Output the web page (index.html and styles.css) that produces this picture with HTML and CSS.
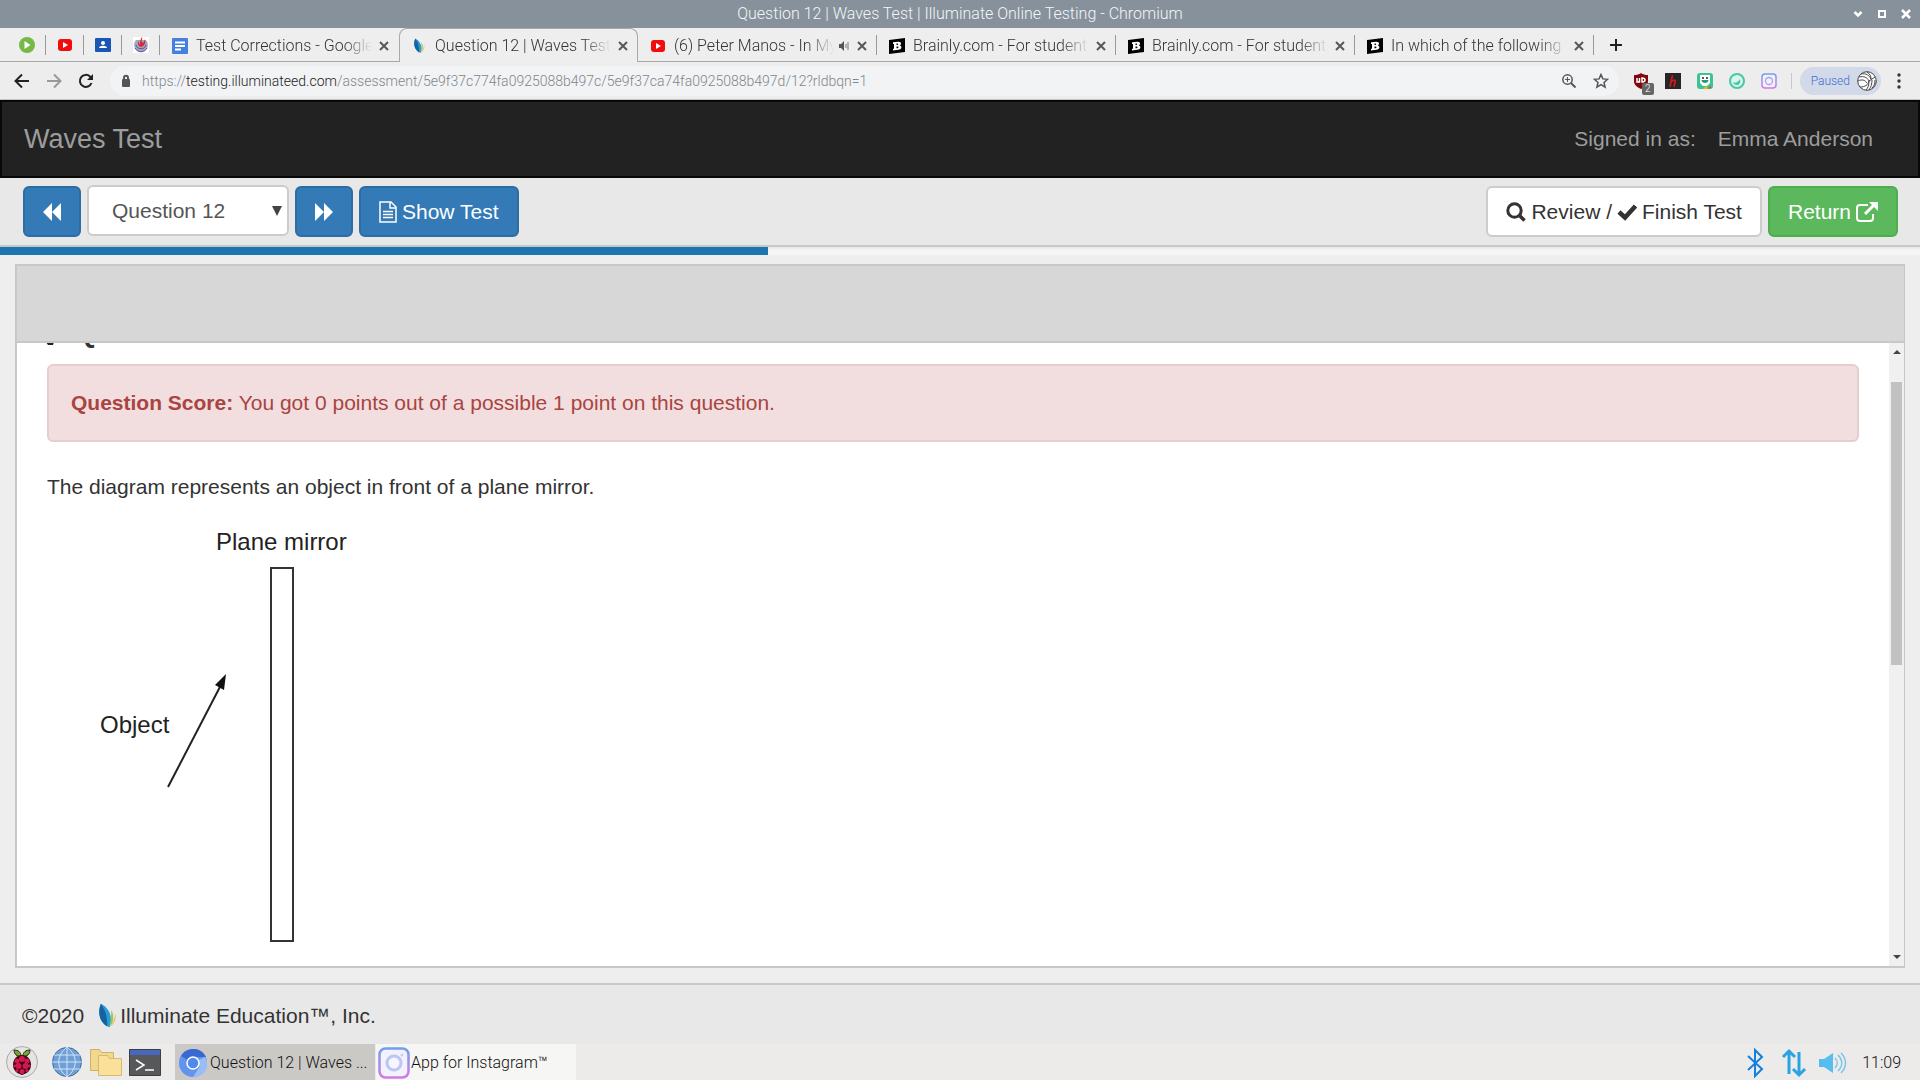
FILE: index.html
```html
<!DOCTYPE html>
<html lang="en">
<head>
<meta charset="utf-8">
<title>Question 12 | Waves Test | Illuminate Online Testing</title>
<link rel="stylesheet" href="styles.css">
</head>
<body>
<svg class="defs" width="0" height="0" aria-hidden="true">
  <defs>
    <linearGradient id="insta" x1="0" y1="0" x2="0" y2="1"><stop offset="0" stop-color="#6fa0ea"/><stop offset="1" stop-color="#d07be6"/></linearGradient>
    <symbol id="close" viewBox="0 0 16 16"><path d="M4 4l8 8M12 4l-8 8" stroke="#55585c" stroke-width="2"/></symbol>
    <symbol id="youtube" viewBox="0 0 16 16"><rect x="1" y="2" width="14" height="12" rx="3" fill="#f20d0d"/><path d="M6 5l5 3-5 3z" fill="#fff"/></symbol>
    <symbol id="brainly" viewBox="0 0 16 16"><path d="M0 2l16-2v14L0 16z" fill="#000"/><path d="M4 4.300l5-.6c2-.2 3 .6 3 1.800 0 1-.6 1.600-1.200 1.900 1 .2 1.600.8 1.600 1.900 0 1.500-1.200 2.300-3 2.500L4 12.400v-1.600l1-.1V5.900l-1 .1zM7.500 5.600v1.500h.8c1.200-.1 1.200-1.600 0-1.500zm0 3v1.700h1c1.300-.1 1.300-1.800 0-1.700z" fill="#fff"/></symbol>
    <symbol id="leaf" viewBox="0 0 22 30"><path d="M4 1c10 5 14 16 10 27C4 25-1 13 4 1z" fill="#2a9bd6"/><path d="M4 1c-4 10-2 20 7 26C12 18 9 8 4 1z" fill="#14639f"/><path d="M16 8c3 5 3 14-1 19 0-6 1-13 1-19z" fill="#8fcb5b"/><path d="M21 12c1 7-2 13-6 15 3-5 5-10 6-15z" fill="#f3c25b"/></symbol>
  </defs>
</svg>

<header class="titlebar">
  <span class="window-title">Question 12 | Waves Test | Illuminate Online Testing - Chromium</span>
  <div class="window-buttons">
    <button aria-label="Minimize"><svg width="12" height="12" viewBox="0 0 12 12"><path d="M2.500 4L6 7.500 9.500 4" fill="none" stroke="#fff" stroke-width="2.500"/></svg></button>
    <button aria-label="Maximize"><svg width="12" height="12" viewBox="0 0 12 12"><path d="M3 3h6v6H3z" fill="none" stroke="#fff" stroke-width="2"/></svg></button>
    <button aria-label="Close window"><svg width="12" height="12" viewBox="0 0 12 12"><path d="M2 2l8 8M10 2l-8 8" stroke="#fff" stroke-width="2.500"/></svg></button>
  </div>
</header>

<nav class="tabs" aria-label="Tabs">
  <div class="pinned"><svg width="16" height="16" viewBox="0 0 16 16"><circle cx="8" cy="8" r="8" fill="#76b947"/><path d="M5.500 4l6 4-6 4z" fill="#fff"/></svg></div>
  <div class="pinned"><svg width="16" height="16"><use href="#youtube"/></svg></div>
  <div class="pinned"><svg width="16" height="16" viewBox="0 0 16 16"><rect y="1" width="16" height="14" rx="1" fill="#1b56b5"/><circle cx="8" cy="6" r="2" fill="#fff"/><path d="M4 11c0-3 8-3 8 0z" fill="#fff"/></svg></div>
  <div class="pinned"><svg width="16" height="16" viewBox="0 0 16 16"><rect width="16" height="16" fill="#fff"/><path d="M3 3C-1 8 2 15 8 15s9-7 5-12" fill="#a3a4c6"/><path d="M3 8c1 5 9 5 10 0M2 11c3 5 9 5 12 0" fill="none" stroke="#55558a"/><path d="M9 0c1 3-1 3 0 5s3-1 2-3c3 4 0 7-3 8C5 9 4 6 6 4c0 2 0 3 1 3 0-2 0-4 2-7z" fill="#d92a2f"/></svg></div>
  <div class="tab"><svg width="16" height="16" viewBox="0 0 16 16"><rect width="16" height="16" rx="1" fill="#4480e0"/><path d="M3 4.500h10M3 8h10M3 11.500h6" stroke="#fff" stroke-width="2"/></svg><a href="#docs">Test Corrections - Google</a><button aria-label="Close tab"><svg width="16" height="16"><use href="#close"/></svg></button></div>
  <div class="tab active"><svg width="16" height="16"><use href="#leaf"/></svg><a href="#question">Question 12 | Waves Test</a><button aria-label="Close tab"><svg width="16" height="16"><use href="#close"/></svg></button></div>
  <div class="tab"><svg width="16" height="16"><use href="#youtube"/></svg><a href="#video">(6) Peter Manos - In My</a><svg width="12" height="12" viewBox="0 0 12 12"><path d="M1 4h2l3-3v10L3 8H1z" fill="#555"/><path d="M8 4v4M10 2v8" stroke="#777"/></svg><button aria-label="Close tab"><svg width="16" height="16"><use href="#close"/></svg></button></div>
  <div class="tab"><svg width="16" height="16"><use href="#brainly"/></svg><a href="#brainly1">Brainly.com - For student</a><button aria-label="Close tab"><svg width="16" height="16"><use href="#close"/></svg></button></div>
  <div class="tab"><svg width="16" height="16"><use href="#brainly"/></svg><a href="#brainly2">Brainly.com - For student</a><button aria-label="Close tab"><svg width="16" height="16"><use href="#close"/></svg></button></div>
  <div class="tab"><svg width="16" height="16"><use href="#brainly"/></svg><a href="#brainly3">In which of the following</a><button aria-label="Close tab"><svg width="16" height="16"><use href="#close"/></svg></button></div>
  <button class="new-tab" aria-label="New tab"><svg width="14" height="14" viewBox="0 0 14 14"><path d="M7 1v12M1 7h12" stroke="#222" stroke-width="2"/></svg></button>
</nav>

<div class="browser-bar">
  <button class="tool" aria-label="Back"><svg width="16" height="16" viewBox="0 0 16 16"><path d="M15 8H2M8 1.500L1.500 8 8 14.500" fill="none" stroke="#222" stroke-width="2"/></svg></button>
  <button class="tool" aria-label="Forward"><svg width="16" height="16" viewBox="0 0 16 16"><path d="M1 8h13M8 1.500L14.500 8 8 14.500" fill="none" stroke="#999" stroke-width="2"/></svg></button>
  <button class="tool" aria-label="Reload"><svg width="16" height="16" viewBox="0 0 16 16"><path d="M13.500 10A6 6 0 1 1 12 3.500L13 5" fill="none" stroke="#222" stroke-width="2"/><path d="M15 1v6H9z" fill="#222"/></svg></button>
  <div class="address">
    <svg width="12" height="14" viewBox="0 0 12 14"><rect x="2" y="5" width="8" height="8" rx="1" fill="#555"/><path d="M4 6V4c0-3 4-3 4 0v2" fill="none" stroke="#555" stroke-width="2"/></svg>
    <a class="url" href="#url">https://<b>testing.illuminateed.com</b>/assessment/5e9f37c774fa0925088b497c/5e9f37ca74fa0925088b497d/12?rldbqn=1</a>
    <button class="tool" aria-label="Zoom"><svg width="16" height="16" viewBox="0 0 16 16"><circle cx="6.500" cy="6.500" r="4.700" fill="none" stroke="#555" stroke-width="1.500"/><path d="M10 10l4.500 4.500" stroke="#555" stroke-width="2"/><path d="M4 6.500h5M6.500 4v5" stroke="#555"/></svg></button>
    <button class="tool" aria-label="Bookmark"><svg width="16" height="16" viewBox="0 0 16 16"><path d="M8 1.500l1.900 4.400 4.700.4-3.600 3.100 1.100 4.700L8 11.600l-4.100 2.500L5 9.400 1.400 6.300l4.700-.4z" fill="none" stroke="#555" stroke-width="1.500"/></svg></button>
  </div>
  <div class="extensions">
    <button class="tool badge-host" aria-label="Blocker"><svg width="16" height="16" viewBox="0 0 16 16"><path d="M1 2c3 0 5-.5 7-2 2 1.500 4 2 7 2v6c0 4-3 6-7 8-4-2-7-4-7-8z" fill="#80070b"/><path d="M4 5v4h2.500V5M9 5v4c4 0 4-4 0-4z" fill="none" stroke="#fff" stroke-width="1.500"/></svg><span class="badge">2</span></button>
    <button class="tool" aria-label="Honey"><svg width="16" height="16" viewBox="0 0 16 16"><rect width="16" height="16" fill="#262626"/><path d="M7.500 2L5 14M6 9c2-2 5-3 4 0l-1 5" fill="none" stroke="#c8191d" stroke-width="1.800"/></svg></button>
    <button class="tool" aria-label="Bitmoji"><svg width="16" height="16" viewBox="0 0 16 16"><rect width="16" height="16" rx="3" fill="#3bc392"/><path d="M3 2h10v8l-3 3H6l-3-3z" fill="#fff"/><circle cx="6" cy="5" r="1" fill="#222"/><circle cx="10" cy="5" r="1" fill="#222"/><path d="M4.500 7h7c0 4-7 4-7 0z" fill="#279b72"/><path d="M6 16l3-3 3 3z" fill="#f7b512"/><path d="M10 16l4-3v2z" fill="#e23c2d"/></svg></button>
    <button class="tool" aria-label="Screencastify"><svg width="16" height="16" viewBox="0 0 16 16"><circle cx="8" cy="8" r="7" fill="#dcf5ec" stroke="#46c9a4" stroke-width="2"/><path d="M4 9c2 2 5 0 7-3 1 4-1 6-3 6S4 11 4 9z" fill="#46c9a4"/></svg></button>
    <button class="tool" aria-label="App for Instagram"><svg width="16" height="16" viewBox="0 0 16 16"><rect x="1" y="1" width="14" height="14" rx="3" fill="#f5effc" stroke="url(#insta)" stroke-width="1.500"/><circle cx="8" cy="8" r="3.500" fill="none" stroke="#a5a4e9" stroke-width="1.300"/></svg></button>
  </div>
  <button class="profile"><span>Paused</span><svg width="20" height="20" viewBox="0 0 20 20"><circle cx="10" cy="10" r="9.300" fill="#fff" stroke="#444"/><path d="M2 6c5-1 8 0 10 4M4 3c5-1 8 1 10 5M12 10c-1 4-4 6-9 6M12 10l6-4M12 10c0 4-1 7-3 9M14 8c0-3-1-5-4-7M15 9c0 4-1 7-3 10M1 10c4-2 7-1 9 2M18 9c0 4-1 6-3 8" fill="none" stroke="#444"/></svg></button>
  <button class="tool menu" aria-label="Menu"><svg width="4" height="16" viewBox="0 0 4 16"><g fill="#333"><circle cx="2" cy="2" r="1.700"/><circle cx="2" cy="8" r="1.700"/><circle cx="2" cy="14" r="1.700"/></g></svg></button>
</div>

<header class="navbar">
  <a class="brand" href="#home">Waves Test</a>
  <div class="signed-in"><span>Signed in as:</span><a href="#account">Emma Anderson</a></div>
</header>

<div class="test-bar">
  <button class="btn primary square" aria-label="Previous question"><svg width="20" height="20" viewBox="0 0 20 20"><path d="M10 1v18L1 10zM19 1v18l-9-9z" fill="#fff"/></svg></button>
  <div class="select-box">
    <select aria-label="Question"><option>Question 12</option></select>
    <svg class="caret" width="10" height="10" viewBox="0 0 10 10"><path d="M0 0h10L5 10z" fill="#444"/></svg>
  </div>
  <button class="btn primary square" aria-label="Next question"><svg width="20" height="20" viewBox="0 0 20 20"><path d="M1 1v18l9-9zM10 1v18l9-9z" fill="#fff"/></svg></button>
  <button class="btn primary"><svg width="18" height="22" viewBox="0 0 18 22"><path d="M1 1h11l5 5v15H1zM11 1v6h6M4 10.500h10M4 13.500h10M4 16.500h10" fill="none" stroke="#fff" stroke-width="1.500"/></svg><span>Show Test</span></button>
  <button class="btn plain finish"><svg width="20" height="20" viewBox="0 0 20 20"><circle cx="8.500" cy="8.500" r="6.700" fill="none" stroke="#333" stroke-width="3"/><path d="M13 13l5.500 5.500" stroke="#333" stroke-width="3.500"/></svg><span>Review /</span><svg width="20" height="20" viewBox="0 0 20 20"><path d="M2 10l6 5.500L18.500 4" fill="none" stroke="#333" stroke-width="4.500"/></svg><span>Finish Test</span></button>
  <button class="btn success"><span>Return</span><svg width="22" height="20" viewBox="0 0 22 20"><path d="M12 3H4a3 3 0 0 0-3 3v10a3 3 0 0 0 3 3h10a3 3 0 0 0 3-3v-4" fill="none" stroke="#fff" stroke-width="2"/><path d="M9 12l9-9" stroke="#fff" stroke-width="3"/><path d="M13 0h9v9z" fill="#fff"/></svg></button>
</div>
<div class="progress"><div class="progress-value" style="width:40%"></div></div>

<main class="stage">
  <section class="panel">
    <div class="panel-head"></div>
    <div class="panel-body">
      <article class="question">
        <h2><svg width="22" height="24" viewBox="0 0 22 24"><path d="M7 1v18M7 2h14l-4 5 4 5H7" fill="none" stroke="#222" stroke-width="2"/><path d="M-1 21h8l-1 3H1z" fill="#222"/></svg>Question</h2>
        <div class="alert"><strong>Question Score:</strong> You got 0 points out of a possible 1 point on this question.</div>
        <p>The diagram represents an object in front of a plane mirror.</p>
        <svg class="diagram" width="320" height="440" viewBox="0 0 320 440" role="img" aria-label="An object in front of a plane mirror">
          <text x="169" y="36">Plane mirror</text>
          <rect x="224" y="54" width="22" height="373" fill="none" stroke="#333" stroke-width="2"/>
          <text x="53" y="219">Object</text>
          <path d="M121 273L175 169" stroke="#222" stroke-width="2"/>
          <path d="M179 160l-2 16-9-5z" fill="#111"/>
        </svg>
      </article>
      <div class="scrollbar">
        <svg width="8" height="4" viewBox="0 0 8 4"><path d="M4 0l4 4H0z" fill="#444"/></svg>
        <div class="track"><div class="thumb"></div></div>
        <svg width="8" height="4" viewBox="0 0 8 4"><path d="M0 0h8L4 4z" fill="#444"/></svg>
      </div>
    </div>
  </section>
</main>

<footer class="site-footer"><span>©2020</span><svg width="22" height="26"><use href="#leaf"/></svg><span>Illuminate Education™, Inc.</span></footer>

<div class="taskbar">
  <div class="launchers">
    <button class="tool" aria-label="Menu"><svg width="32" height="32" viewBox="0 0 32 32"><circle cx="16" cy="16" r="15.500" fill="#e4e4e4" stroke="#aaa"/><path d="M15 10C11 11 8 8 8 4c4 0 7 2 7 6zm2 0c4 1 7-2 7-6-4 0-7 2-7 6z" fill="#75a928" stroke="#222"/><path d="M16 9c5 0 9 4 9 10s-5 9-9 10c-4-1-9-4-9-10S11 9 16 9z" fill="#3b0715"/><g fill="#d51750"><circle cx="16" cy="13" r="3"/><circle cx="11" cy="15" r="2.500"/><circle cx="21" cy="15" r="2.500"/><circle cx="12.500" cy="20" r="3"/><circle cx="19.500" cy="20" r="3"/><circle cx="16" cy="25.500" r="2.500"/><circle cx="8.800" cy="20" r="1.400"/><circle cx="23.200" cy="20" r="1.400"/><circle cx="11" cy="24.500" r="1.500"/><circle cx="21" cy="24.500" r="1.500"/></g></svg></button>
    <button class="tool" aria-label="Web browser"><svg width="32" height="32" viewBox="0 0 32 32"><circle cx="16" cy="16" r="14.500" fill="#6f9fd6" stroke="#3f6d9e"/><path d="M16 1v30M1 16h30M3 9h26M3 23h26M16 1C5 10 5 22 16 31M16 1c11 9 11 21 0 30" fill="none" stroke="#d2e5f8"/></svg></button>
    <button class="tool" aria-label="File manager"><svg width="32" height="32" viewBox="0 0 32 32"><path d="M.5 3.500h9l2 3h12v18H.5z" fill="#f2d88c" stroke="#ceb36c"/><path d="M8.500 9.500h9l2 3h12v17h-23z" fill="#fbe09a" stroke="#d4b973"/></svg></button>
    <button class="tool" aria-label="Terminal"><svg width="32" height="32" viewBox="0 0 32 32"><path d="M.5 3.500h31v26H.5z" fill="#57585a" stroke="#3c3f48"/><path d="M1 4h30v5H1z" fill="#4868bd"/><path d="M7 14l8 5-8 5M16 24h9" fill="none" stroke="#fff" stroke-width="1.500"/></svg></button>
  </div>
  <button class="task current"><svg width="32" height="32" viewBox="0 0 32 32"><circle cx="16" cy="16" r="14" fill="#6293ee"/><path d="M16 16L4 9C9 0 24-1 29 10H16z" fill="#3868d0"/><path d="M16 16l12-6c6 10-1 20-12 20l7-11z" fill="#9bbdf5"/><circle cx="16" cy="16" r="6" fill="#5188ec" stroke="#fff" stroke-width="1.500"/></svg><span>Question 12 | Waves ...</span></button>
  <button class="task"><svg width="32" height="32" viewBox="0 0 32 32"><rect x="1.500" y="1.500" width="29" height="29" rx="6" fill="#f4f0fc" stroke="url(#insta)" stroke-width="2.500"/><circle cx="16" cy="16" r="7" fill="#f7f5ff" stroke="#b9c7f2" stroke-width="3"/><circle cx="24" cy="8" r="1.500" fill="#c9ccf5"/></svg><span>App for Instagram™</span></button>
  <div class="tray">
    <svg width="32" height="32" viewBox="0 0 32 32"><path d="M9 9l14 13-7 7V3l7 7L9 23" fill="none" stroke="#1580dc" stroke-width="2"/></svg>
    <svg width="32" height="32" viewBox="0 0 32 32"><path d="M11 27V5M5 10l6-6 6 6M21 5v22M15 22l6 6 6-6" fill="none" stroke="#29a3e2" stroke-width="3"/></svg>
    <svg width="32" height="32" viewBox="0 0 32 32"><path d="M2 12h5l9-6v20l-9-6H2z" fill="#57bdf0"/><path d="M18 11c3 3 3 7 0 10M21 8c5 5 5 11 0 16M24 6c6 6 6 14 0 20" fill="none" stroke="#7ac5ec" stroke-width="1.500"/></svg>
    <time>11:09</time>
  </div>
</div>
</body>
</html>
```
FILE: styles.css
```css
* { box-sizing: border-box; }

body {
  margin: 0;
  min-height: 100vh;
  display: flex;
  flex-direction: column;
  background: #eee;
  color: #333;
  font-family: "Liberation Sans", Arial, sans-serif;
  font-size: 21px;
  line-height: 30px;
}

svg { display: block; flex: none; }
a { color: inherit; text-decoration: none; }
button { margin: 0; padding: 0; border: 0; background: none; color: inherit; font: inherit; }
.defs { position: absolute; }

.titlebar, .tabs, .browser-bar, .taskbar {
  font-family: Roboto, sans-serif;
  font-weight: 300;
  font-size: 16px;
  line-height: 20px;
}

.tool { display: flex; align-items: center; justify-content: center; }

/* Window frame */
.titlebar {
  display: grid;
  grid-template-columns: 1fr auto 1fr;
  align-items: center;
  height: 28px;
  padding: 0 8px;
  background: #86919b;
  color: #f4f6f8;
}
.window-title { grid-column: 2; }
.window-buttons { display: flex; justify-content: flex-end; gap: 12px; }

/* Tab strip */
.tabs {
  display: flex;
  height: 34px;
  padding-left: 8px;
  background: #eee;
  box-shadow: inset 0 -1px #a9a9a9;
}
.pinned, .tab { display: flex; align-items: center; position: relative; }
.pinned { width: 38px; justify-content: center; }
.tab { flex: 0 1 239px; min-width: 0; gap: 4px; padding: 2px 7px 0 12px; }
.tab a {
  flex: 1;
  min-width: 0;
  margin-left: 4px;
  overflow: hidden;
  white-space: nowrap;
  -webkit-mask-image: linear-gradient(to left, transparent, #000 28px);
  mask-image: linear-gradient(to left, transparent, #000 28px);
}
.pinned::after, .tab::after {
  content: "";
  position: absolute;
  right: 0;
  top: 7px;
  width: 1px;
  height: 20px;
  background: #999;
}
.tab.active {
  padding: 1px 6px 0 11px;
  background: #eee;
  border: 1px solid #a9a9a9;
  border-bottom: 0;
  border-radius: 8px 8px 0 0;
}
.tab.active::after, .tab:has(+ .active)::after { display: none; }
.new-tab { padding: 0 15px; }

/* Address row */
.browser-bar {
  display: flex;
  align-items: center;
  height: 38px;
  padding: 0 19px 0 14px;
  border-bottom: 1px solid #c4c4c4;
  background: #ededed;
}
.browser-bar > .tool { width: 16px; margin-right: 16px; }
.address {
  flex: 1;
  display: flex;
  align-items: center;
  gap: 10px;
  height: 30px;
  padding: 0 10px;
  border-radius: 15px;
  background: #f2f3f5;
  font-size: 14px;
  color: #80868b;
}
.url { flex: 1; }
.url b { font-weight: 300; color: #222; }
.address .tool + .tool { margin-left: 6px; }
.extensions { display: flex; gap: 16px; padding: 0 14px; border-right: 1px solid #c8c8c8; }
.badge-host { position: relative; }
.badge {
  position: absolute;
  left: 9px;
  top: 10px;
  width: 12px;
  border-radius: 2px;
  background: #666;
  color: #fff;
  font-size: 10px;
  line-height: 12px;
}
.profile {
  display: flex;
  align-items: center;
  gap: 7px;
  height: 28px;
  margin: 0 16px 0 8px;
  padding: 0 4px 0 11px;
  border-radius: 14px;
  background: #d2d9e8;
  color: #3f6fd0;
  font-size: 12px;
}
.browser-bar > .menu { width: 4px; margin: 0; }

/* Page header */
.navbar {
  display: flex;
  align-items: center;
  justify-content: space-between;
  height: 78px;
  padding: 0 45px 0 22px;
  border: 2px solid #080808;
  background: #222;
  color: #9d9d9d;
}
.brand { font-size: 27px; }
.signed-in { display: flex; gap: 22px; }

/* Question controls */
.test-bar {
  display: flex;
  align-items: center;
  gap: 6px;
  height: 69px;
  padding: 0 22px 0 23px;
  border-bottom: 2px solid #c8c8c8;
  background: #e8e8e8;
}
.btn {
  display: flex;
  align-items: center;
  gap: 5px;
  height: 51px;
  padding: 0 18px;
  border: 2px solid;
  border-radius: 6px;
  white-space: nowrap;
}
.square { width: 58px; padding: 0; justify-content: center; }
.primary { border-color: #2e6da4; background: #337ab7; color: #fff; }
.plain { border-color: #ccc; background: #fff; }
.success { border-color: #4cae4c; background: #5cb85c; color: #fff; }
.finish { margin-left: auto; }
.select-box { position: relative; width: 202px; margin-bottom: 2px; }
.select-box select {
  appearance: none;
  display: block;
  width: 100%;
  height: 51px;
  padding: 0 23px;
  border: 2px solid #ccc;
  border-radius: 6px;
  background: #fff;
  color: #555;
  font: inherit;
}
.caret { position: absolute; right: 7px; top: 21px; pointer-events: none; }

.progress { height: 8px; background: linear-gradient(#e6e6e6, #f5f5f5 3px); }
.progress-value { height: 100%; background: #1d75af; }

/* Question panel */
.stage { flex: 1; display: flex; padding: 9px 15px 15px; }
.panel {
  flex: 1;
  display: flex;
  flex-direction: column;
  min-width: 0;
  border: 2px solid #c8c8c8;
  border-right-width: 1px;
  background: #fff;
}
.panel-head { height: 77px; border-bottom: 2px solid #c8c8c8; background: #d7d7d7; }
.panel-body { flex: 1; display: flex; overflow: hidden; }
.question { flex: 1; padding: 0 30px; }
.question h2 {
  display: flex;
  align-items: center;
  gap: 7px;
  margin: -26px 0 15px;
  font-size: 27px;
  line-height: 32px;
}
.question h2 svg { overflow: visible; }
.alert {
  padding: 22px;
  border: 2px solid #e6cdd1;
  border-radius: 6px;
  background: #f2dede;
  color: #a94442;
}
.question p { margin: 30px 0 12px; }
.diagram { max-width: 100%; font-size: 24px; fill: #222; }

.scrollbar {
  display: flex;
  flex-direction: column;
  align-items: center;
  width: 15px;
  padding: 7px 0;
  background: #f0f0f0;
}
.track { flex: 1; width: 11px; padding: 28px 0; }
.thumb { height: 52%; background: #c1c1c1; }

.site-footer {
  display: flex;
  align-items: center;
  height: 61px;
  padding: 2px 22px 0;
  border-top: 2px solid #c8c8c8;
  background: #e8e8e8;
}
.site-footer svg { margin: 0 2px 0 12px; }

/* Desktop taskbar */
.taskbar { display: flex; height: 36px; background: #ecebea; color: #111; }
.launchers { display: flex; gap: 7px; padding: 0 14px 0 6px; }
.launchers .tool:first-child { margin-right: 6px; }
.task {
  display: flex;
  align-items: center;
  gap: 1px;
  width: 200px;
  margin-right: 1px;
  padding: 1px 2px 0;
  background: #f6f6f4;
  white-space: nowrap;
}
.task.current { background: #cbc9c6; }
.tray { display: flex; align-items: center; gap: 7px; margin-left: auto; padding: 1px 19px 0 0; }
.tray time { margin-left: 6px; }
```
